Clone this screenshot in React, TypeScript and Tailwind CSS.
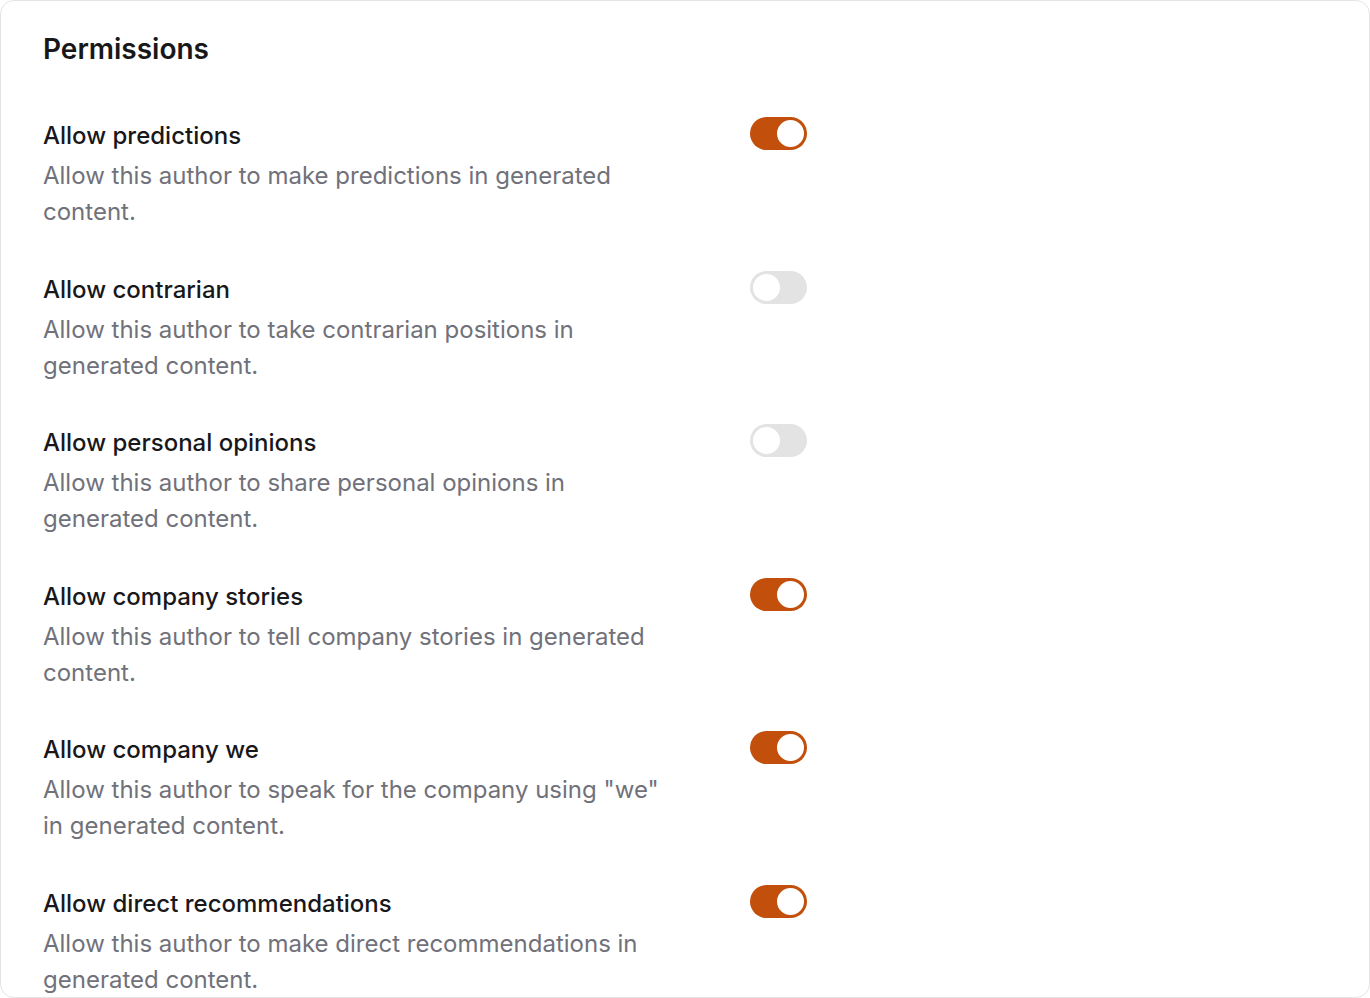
import { useState } from "react";

interface Permission {
  id: string;
  label: string;
  description: string;
  enabled: boolean;
}

const initial: Permission[] = [
  {
    id: "predictions",
    label: "Allow predictions",
    description: "Allow this author to make predictions in generated content.",
    enabled: true,
  },
  {
    id: "contrarian",
    label: "Allow contrarian",
    description: "Allow this author to take contrarian positions in generated content.",
    enabled: false,
  },
  {
    id: "opinions",
    label: "Allow personal opinions",
    description: "Allow this author to share personal opinions in generated content.",
    enabled: false,
  },
  {
    id: "stories",
    label: "Allow company stories",
    description: "Allow this author to tell company stories in generated content.",
    enabled: true,
  },
  {
    id: "we",
    label: "Allow company we",
    description: 'Allow this author to speak for the company using "we" in generated content.',
    enabled: true,
  },
  {
    id: "recommendations",
    label: "Allow direct recommendations",
    description: "Allow this author to make direct recommendations in generated content.",
    enabled: true,
  },
];

function Toggle({ on, onChange }: { on: boolean; onChange: () => void }) {
  return (
    <button
      type="button"
      role="switch"
      aria-checked={on}
      onClick={onChange}
      className={`flex h-[33px] w-[57px] shrink-0 items-center rounded-full p-[1px] transition-colors ${
        on ? "justify-end bg-[#c2500c]" : "justify-start bg-[#e3e3e3]"
      }`}
    >
      <span
        className={`block h-[31px] w-[31px] rounded-full border-2 bg-white ${
          on ? "border-[#c2500c]" : "border-[#e3e3e3]"
        }`}
      />
    </button>
  );
}

export default function App() {
  const [perms, setPerms] = useState(initial);

  const toggle = (id: string) =>
    setPerms((p) => p.map((x) => (x.id === id ? { ...x, enabled: !x.enabled } : x)));

  return (
    <div className="h-[998px] w-[1370px] bg-white font-['Inter',sans-serif]">
      <section className="h-full overflow-hidden rounded-[14px] border border-[#e4e4e4] bg-white pl-[42px] pt-[30px]">
        <h1 className="text-[28px] font-semibold leading-[36px] text-[#18181b]">Permissions</h1>

        <div className="mt-[51px] flex flex-col gap-[41.6px]">
          {perms.map((p) => (
            <div key={p.id} className="flex items-start">
              <div className="w-[630px]">
                <h2 className="text-[24px] font-medium leading-[36px] text-[#18181b]">{p.label}</h2>
                <p className="mt-[4px] text-[24px] leading-[36px] text-[#71717a]">{p.description}</p>
              </div>
              <div className="-mt-[1px] ml-[77px]">
                <Toggle on={p.enabled} onChange={() => toggle(p.id)} />
              </div>
            </div>
          ))}
        </div>
      </section>
    </div>
  );
}
